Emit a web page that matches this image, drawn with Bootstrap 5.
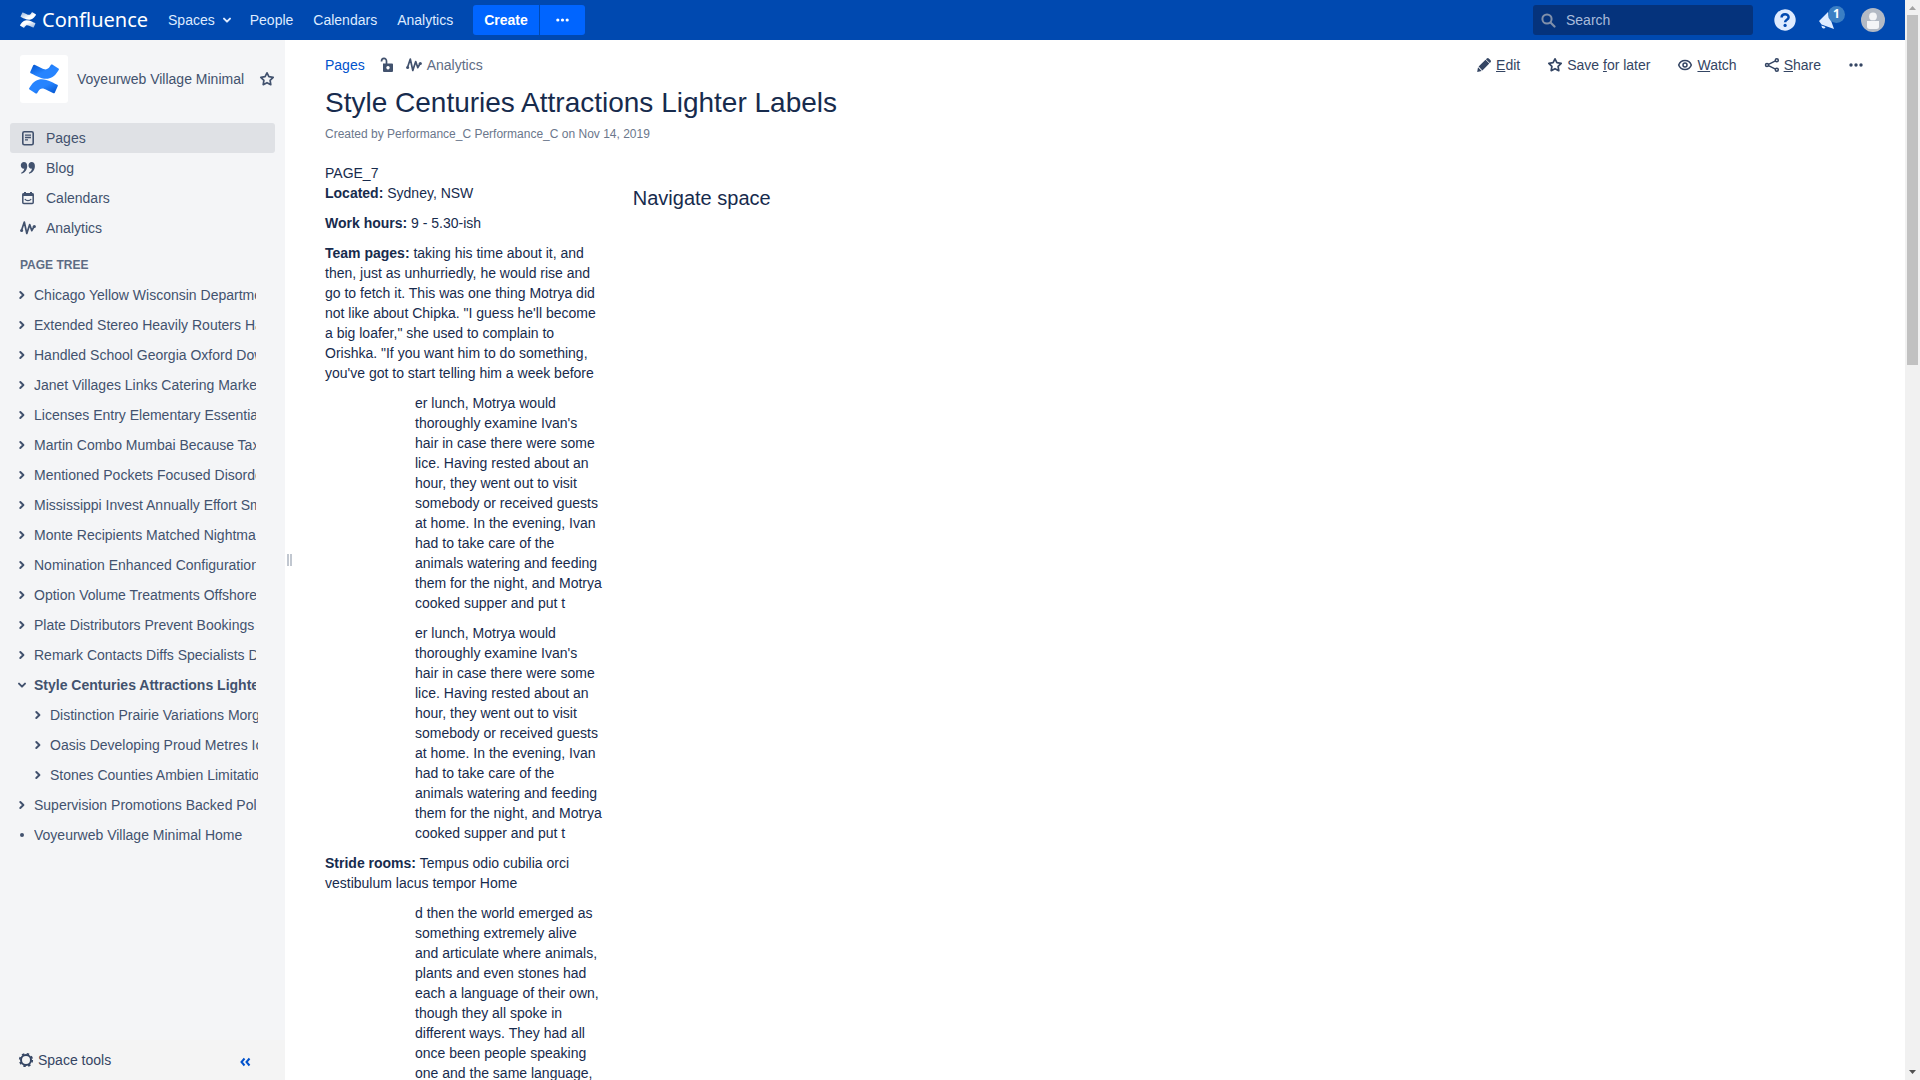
<!DOCTYPE html>
<html lang="en">
<head>
<meta charset="utf-8">
<meta name="viewport" content="width=device-width, initial-scale=1">
<title>Style Centuries Attractions Lighter Labels - Confluence</title>
<link href="https://cdn.jsdelivr.net/npm/bootstrap@5.3.0/dist/css/bootstrap.min.css" rel="stylesheet">
<style>
:root{--navy:#172b4d;--slate:#42526e;--tool:#344563;--brand:#0049b0;--action:#0065ff}
body{font-family:"Liberation Sans",Arial,sans-serif;font-size:14px;line-height:20px;color:var(--navy);background:#fff}
svg{display:block;flex:none}
a{text-decoration:none;color:inherit}
.topbar{height:40px;background:var(--brand);color:#deebff}
.brand-home{margin:0 10px 0 20px}
.brand-name{font-family:"Noto Sans",sans-serif;font-size:20px;line-height:32px;color:#fff;margin-left:6px}
.topbar .nav-item-link{padding:10px;color:#deebff}
.topbar .nav-item-link.has-menu{padding-right:7px;gap:6px}
.create-group{gap:1px;margin-left:10px}
.btn-create{background:var(--action);color:#fff;border:0;font-size:14px;line-height:20px;padding:5px 11px;height:30px;border-radius:3px}
.btn-create:hover{background:#2684ff;color:#fff}
.btn-create.more{padding:0 15px}
.search-wrap{width:220px;height:30px;background:#05337c;border-radius:3px;padding:0 8px}
.search-wrap input{background:transparent;border:0;outline:0;color:#deebff;width:100%;font-size:14px;padding:0;margin-left:10px}
.search-wrap input::placeholder{color:#a9bcdb;opacity:1}
.icon-btn{border:0;background:none;padding:0;color:inherit}
.help-btn{margin-left:21px}
.notify-btn{margin:0 26px 0 23px}
.avatar-btn{margin-right:20px}
.count-badge{left:9px;top:-4px;width:17px;height:17px;border-radius:9px;background:#3b7fc4;color:#fff;font:bold 12px/16px "Noto Sans",sans-serif;text-align:center}
.sidebar{width:285px;background:#f4f5f7;color:var(--slate)}
.space-head{padding:15px 10px 20px 20px;gap:9px}
.space-logo{width:48px;height:48px;background:#fff;border-radius:3px}
.side-link{height:30px;padding:0 10px;margin:0 10px;border-radius:3px;color:var(--slate)}
.side-link.current{background:#dfe1e5}
.side-link span{margin-left:10px}
.tree-title{font-size:12px;line-height:20px;font-weight:700;color:#5e6c84;margin:12px 20px 5px}
.tree{padding:0 29px 0 16px;margin:0}
.tree li>div{height:30px}
.tree a{flex:1 1 0;min-width:0;overflow:hidden;white-space:nowrap;margin-left:6px}
.tree .kids{padding:0;margin:0 -2px 0 16px}
.side-foot{height:40px;background:#f4f4f4;padding:0 34px 0 18px;color:var(--tool)}
.collapse-btn,.crumb-link{color:#0052cc}
.splitter{width:8px;padding-left:2px;gap:1px}
.splitter i{width:2px;height:12px;background:#c1c7d0}
.content{padding:15px 41px 0 32px}
.tools{gap:27px;color:var(--tool)}
.tools button,.crumbs button{border:0;background:none;padding:0;color:inherit;display:flex;align-items:center;gap:4px}
.crumbs{color:#5e6c84}
.crumbs svg{color:var(--slate)}
.crumbs .lock-btn{margin:0 11px 0 14px}
.crumbs button{gap:5px}
.page-title{font-size:28px;line-height:32px;font-weight:400;margin:12px 0 0}
.byline{font-size:12px;line-height:20px;color:#6b778c;margin:5px 0 19px}
.col-info{width:20%;padding-right:30px}
.col-info p{margin:0 0 10px}
.col-info .inset{margin-left:90px}
.space-nav{font-size:20px;line-height:24px;font-weight:400;margin:23px 0 0}
.scroller{width:15px;background:#f1f1f1}
.scroller i{width:11px;height:350px;background:#c1c1c1}
</style>
<script src="https://cdn.jsdelivr.net/npm/bootstrap@5.3.0/dist/js/bootstrap.bundle.min.js"></script>
</head>
<body class="vh-100 overflow-hidden d-flex">
<svg width="0" height="0" class="position-absolute" aria-hidden="true">
<defs>
<linearGradient id="gTop" x1="1" y1="1" x2="0" y2="0"><stop offset="0" stop-color="#2684ff"/><stop offset=".5" stop-color="#2684ff"/><stop offset="1" stop-color="#0052cc"/></linearGradient>
<linearGradient id="gBot" x1="0" y1="0" x2="1" y2="1"><stop offset="0" stop-color="#2684ff"/><stop offset=".5" stop-color="#2684ff"/><stop offset="1" stop-color="#0052cc"/></linearGradient>
<linearGradient id="wTop" x1="1" y1="1" x2="0" y2="0"><stop offset=".4" stop-color="#fff"/><stop offset="1" stop-color="#8fb0dc"/></linearGradient>
<linearGradient id="wBot" x1="0" y1="0" x2="1" y2="1"><stop offset=".4" stop-color="#fff"/><stop offset="1" stop-color="#8fb0dc"/></linearGradient>
<symbol id="chev" viewBox="0 0 12 12"><path d="M4.300 3 7.400 6l-3.100 3" fill="none" stroke="currentColor" stroke-width="2" stroke-linecap="round" stroke-linejoin="round"/></symbol>
<symbol id="chevd" viewBox="0 0 12 12"><path d="M3 4.600 6 7.600l3-3" fill="none" stroke="currentColor" stroke-width="2" stroke-linecap="round" stroke-linejoin="round"/></symbol>
<symbol id="star" viewBox="0 0 16 16"><path d="m8 1.800 1.900 3.900 4.300.6-3.100 3 .7 4.400L8 11.700l-3.800 2 .7-4.400-3.100-3 4.300-.6z" fill="none" stroke="currentColor" stroke-width="1.700" stroke-linejoin="round"/></symbol>
<symbol id="wave" viewBox="0 0 16 16"><path d="M1.500 10.500 4.300 2l2.500 11.500L9.700 4.500l2.100 6.200 2-3.700" fill="none" stroke="currentColor" stroke-width="1.700" stroke-linecap="round" stroke-linejoin="round"/><circle cx="1.600" cy="10.400" r="1.500" fill="currentColor"/><circle cx="14.300" cy="6.500" r="1.600" fill="currentColor"/></symbol>
<symbol id="dots" viewBox="0 0 16 16"><g fill="currentColor"><circle cx="3" cy="8" r="1.700"/><circle cx="8" cy="8" r="1.700"/><circle cx="13" cy="8" r="1.700"/></g></symbol>
</defs></svg>
<div class="d-flex flex-column flex-grow-1 overflow-hidden">
<header class="topbar d-flex align-items-center flex-shrink-0">
<a href="#" class="brand-home d-flex align-items-center" aria-label="Confluence home">
<svg width="16" height="16" viewBox="0 0 32 32"><path fill="url(#wBot)" d="M1.200 24.300c-.3.500-.7 1.200-1 1.600-.3.500-.1 1.100.4 1.400l6.600 4.100c.5.300 1.100.1 1.400-.3l1-1.600c2.600-4.300 5.200-3.800 9.900-1.500l6.600 3.100c.5.300 1.100 0 1.400-.5l3.200-7.100c.2-.5 0-1.100-.5-1.300-1.400-.7-4.200-2-6.600-3.200-9-4.400-16.600-4.100-22.400 5.300z"/><path fill="url(#wTop)" d="M30.800 7.700c.3-.5.700-1.200 1-1.600.3-.5.100-1.100-.4-1.400L24.800.6c-.5-.3-1.100-.1-1.400.3l-1 1.600c-2.600 4.300-5.200 3.800-9.900 1.500L5.900.9C5.400.6 4.800.9 4.500 1.400L1.300 8.500c-.2.500 0 1.100.5 1.300 1.400.7 4.200 2 6.600 3.200 9 4.400 16.600 4.100 22.400-5.300z"/></svg>
<span class="brand-name">Confluence</span></a>
<nav class="d-flex">
<a href="#" class="nav-item-link has-menu d-flex align-items-center">Spaces<svg width="12" height="12"><use href="#chevd"/></svg></a>
<a href="#" class="nav-item-link">People</a>
<a href="#" class="nav-item-link">Calendars</a>
<a href="#" class="nav-item-link">Analytics</a>
</nav>
<div class="create-group d-flex" role="group">
<button type="button" class="btn btn-create fw-bold rounded-end-0">Create</button>
<button type="button" class="btn btn-create more rounded-start-0" aria-label="More create options"><svg width="15" height="16"><use href="#dots"/></svg></button>
</div>
<div class="d-flex align-items-center ms-auto">
<label class="search-wrap d-flex align-items-center">
<svg width="15" height="15" viewBox="0 0 15 15"><circle cx="6" cy="6" r="4.600" fill="none" stroke="#8090aa" stroke-width="2"/><path d="m9.500 9.500 4 4" stroke="#8090aa" stroke-width="2.200" stroke-linecap="round"/></svg>
<input type="text" placeholder="Search" aria-label="Search"></label>
<button type="button" class="icon-btn help-btn" aria-label="Help"><svg width="22" height="22" viewBox="0 0 22 22"><circle cx="11" cy="11" r="10.700" fill="#deebff"/><path d="M7.600 8.600c0-4.600 7-4.300 7-.4 0 2.600-3.500 2.500-3.500 5" fill="none" stroke="#0049b0" stroke-width="2.500"/><circle cx="11.100" cy="16.400" r="1.600" fill="#0049b0"/></svg></button>
<button type="button" class="icon-btn notify-btn position-relative" aria-label="Notifications"><svg width="16" height="20" viewBox="0 0 16 20"><path d="M0 11 9 2l6 17-12.500-4.500zM2.500 15.500l4 1.500c-1 2.500-4 2-4-1.500z" fill="#deebff"/></svg><span class="count-badge position-absolute">1</span></button>
<button type="button" class="icon-btn avatar-btn" aria-label="Profile"><svg width="24" height="24" viewBox="0 0 24 24"><circle cx="12" cy="12" r="12" fill="#b3bac5"/><circle cx="12" cy="8.400" r="3.900" fill="#f4f5f7"/><path d="M6 13h12v5.500q0 2.500-2.500 2.500h-7Q6 21 6 18.500z" fill="#f4f5f7"/></svg></button>
</div>
</header>
<div class="d-flex flex-grow-1 overflow-hidden">
<aside class="sidebar d-flex flex-column flex-shrink-0">
<div class="space-head d-flex align-items-center">
<a href="#" class="space-logo d-flex align-items-center justify-content-center" aria-label="Space home"><svg width="30" height="30" viewBox="0 0 32 32"><path fill="url(#gBot)" d="M1.200 24.300c-.3.500-.7 1.200-1 1.600-.3.500-.1 1.100.4 1.400l6.600 4.100c.5.300 1.100.1 1.400-.3l1-1.600c2.600-4.300 5.200-3.800 9.900-1.500l6.600 3.100c.5.300 1.100 0 1.400-.5l3.200-7.100c.2-.5 0-1.100-.5-1.300-1.400-.7-4.200-2-6.600-3.200-9-4.400-16.600-4.100-22.400 5.300z"/><path fill="url(#gTop)" d="M30.800 7.700c.3-.5.700-1.200 1-1.600.3-.5.100-1.100-.4-1.400L24.800.6c-.5-.3-1.100-.1-1.400.3l-1 1.600c-2.600 4.300-5.200 3.800-9.900 1.500L5.900.9C5.400.6 4.800.9 4.500 1.400L1.300 8.500c-.2.500 0 1.100.5 1.300 1.400.7 4.200 2 6.600 3.200 9 4.400 16.600 4.100 22.400-5.300z"/></svg></a>
<a href="#">Voyeurweb Village Minimal</a>
<button type="button" class="icon-btn ms-auto" aria-label="Favourite space"><svg width="16" height="16"><use href="#star"/></svg></button>
</div>
<nav>
<a href="#" class="side-link current d-flex align-items-center"><svg width="16" height="16" viewBox="0 0 16 16"><rect x="2.800" y="1.800" width="10.400" height="12.900" rx="1.500" fill="none" stroke="currentColor" stroke-width="1.600"/><path d="M5 5.200h6M5 7.500h6M5 9.900h3" stroke="currentColor" stroke-width="1.300"/></svg><span>Pages</span></a>
<a href="#" class="side-link d-flex align-items-center"><svg width="16" height="16" viewBox="0 0 16 16"><path id="q" d="M3.900 2c2 0 3.300 1.600 3.300 4 0 4-2.400 6.800-5.700 7.800l-.4-1c1.900-.9 3-2.400 3.200-4.200C2.500 9 .8 7.500.8 5.200.8 3.300 2.200 2 3.900 2z" fill="currentColor"/><use href="#q" x="7.700"/></svg><span>Blog</span></a>
<a href="#" class="side-link d-flex align-items-center"><svg width="16" height="16" viewBox="0 0 16 16"><rect x="2.800" y="3.800" width="10.400" height="9.700" rx="1" fill="none" stroke="currentColor" stroke-width="1.500"/><path d="M2.500 3.500h11V6h-11zM4 2h2v2H4zM10 2h2v2h-2z" fill="currentColor"/><path d="M4.800 9c1.500 2.200 4.900 2.200 6.400 0" fill="none" stroke="currentColor" stroke-width="1.200"/></svg><span>Calendars</span></a>
<a href="#" class="side-link d-flex align-items-center"><svg width="16" height="16"><use href="#wave"/></svg><span>Analytics</span></a>
</nav>
<h2 class="tree-title">PAGE TREE</h2>
<ul class="tree list-unstyled">
<li><div class="d-flex align-items-center"><svg width="12" height="12"><use href="#chev"/></svg><a href="#">Chicago Yellow Wisconsin Department</a></div></li>
<li><div class="d-flex align-items-center"><svg width="12" height="12"><use href="#chev"/></svg><a href="#">Extended Stereo Heavily Routers Have</a></div></li>
<li><div class="d-flex align-items-center"><svg width="12" height="12"><use href="#chev"/></svg><a href="#">Handled School Georgia Oxford Down</a></div></li>
<li><div class="d-flex align-items-center"><svg width="12" height="12"><use href="#chev"/></svg><a href="#">Janet Villages Links Catering Markets</a></div></li>
<li><div class="d-flex align-items-center"><svg width="12" height="12"><use href="#chev"/></svg><a href="#">Licenses Entry Elementary Essential</a></div></li>
<li><div class="d-flex align-items-center"><svg width="12" height="12"><use href="#chev"/></svg><a href="#">Martin Combo Mumbai Because Taxes</a></div></li>
<li><div class="d-flex align-items-center"><svg width="12" height="12"><use href="#chev"/></svg><a href="#">Mentioned Pockets Focused Disorders</a></div></li>
<li><div class="d-flex align-items-center"><svg width="12" height="12"><use href="#chev"/></svg><a href="#">Mississippi Invest Annually Effort Small</a></div></li>
<li><div class="d-flex align-items-center"><svg width="12" height="12"><use href="#chev"/></svg><a href="#">Monte Recipients Matched Nightmare</a></div></li>
<li><div class="d-flex align-items-center"><svg width="12" height="12"><use href="#chev"/></svg><a href="#">Nomination Enhanced Configurations</a></div></li>
<li><div class="d-flex align-items-center"><svg width="12" height="12"><use href="#chev"/></svg><a href="#">Option Volume Treatments Offshore</a></div></li>
<li><div class="d-flex align-items-center"><svg width="12" height="12"><use href="#chev"/></svg><a href="#">Plate Distributors Prevent Bookings</a></div></li>
<li><div class="d-flex align-items-center"><svg width="12" height="12"><use href="#chev"/></svg><a href="#">Remark Contacts Diffs Specialists During</a></div></li>
<li><div class="d-flex align-items-center"><svg width="12" height="12"><use href="#chevd"/></svg><a href="#" class="fw-bold">Style Centuries Attractions Lighter Labels</a></div>
<ul class="kids list-unstyled">
<li><div class="d-flex align-items-center"><svg width="12" height="12"><use href="#chev"/></svg><a href="#">Distinction Prairie Variations Morgan</a></div></li>
<li><div class="d-flex align-items-center"><svg width="12" height="12"><use href="#chev"/></svg><a href="#">Oasis Developing Proud Metres Icon</a></div></li>
<li><div class="d-flex align-items-center"><svg width="12" height="12"><use href="#chev"/></svg><a href="#">Stones Counties Ambien Limitations</a></div></li>
</ul></li>
<li><div class="d-flex align-items-center"><svg width="12" height="12"><use href="#chev"/></svg><a href="#">Supervision Promotions Backed Policy</a></div></li>
<li><div class="d-flex align-items-center"><svg width="12" height="12" viewBox="0 0 12 12"><circle cx="6" cy="6" r="2" fill="currentColor"/></svg><a href="#">Voyeurweb Village Minimal Home</a></div></li>
</ul>
<div class="side-foot d-flex align-items-center justify-content-between mt-auto">
<button type="button" class="icon-btn d-flex align-items-center"><svg class="me-1" width="16" height="16" viewBox="0 0 16 16"><circle cx="8" cy="8" r="5" fill="none" stroke="currentColor" stroke-width="2"/><circle cx="8" cy="8" r="6.300" fill="none" stroke="currentColor" stroke-width="1.600" stroke-dasharray="2.470 2.478"/></svg>Space tools</button>
<button type="button" class="icon-btn collapse-btn mt-1" aria-label="Collapse sidebar"><svg width="12" height="12" viewBox="0 0 12 12"><path d="M5.500 2.500 2.500 6l3 3.500M10.500 2.500 7.500 6l3 3.500" fill="none" stroke="currentColor" stroke-width="2"/></svg></button>
</div>
</aside>
<div class="splitter d-flex align-items-center flex-shrink-0"><i></i><i></i></div>
<main class="content flex-grow-1 overflow-hidden">
<div class="d-flex justify-content-between">
<div class="crumbs d-flex align-items-center">
<a href="#" class="crumb-link">Pages</a>
<button type="button" class="lock-btn" aria-label="Restrictions"><svg width="16" height="16" viewBox="0 0 16 16"><path d="M2.500 4.500C2.500.5 7.500.5 7.500 4v3" fill="none" stroke="currentColor" stroke-width="1.700"/><path fill-rule="evenodd" d="M4 6.500h9q1 0 1 1V14q0 1-1 1H5q-1 0-1-1zM9 9a1.700 1.700 0 1 0 .01 0z" fill="currentColor"/></svg></button>
<button type="button"><svg width="16" height="16"><use href="#wave"/></svg>Analytics</button>
</div>
<div class="tools d-flex">
<button type="button"><svg width="16" height="16" viewBox="0 0 16 16"><path d="M1.200 15 2 10.300l3.700 3.700zM2.600 9.600l6.900-6.900 3.800 3.800-6.900 6.900zM9.900 2.300l.9-.9q1-.9 2 0l1.800 1.800q.9 1 0 2l-.9.900z" fill="currentColor"/></svg><span><u>E</u>dit</span></button>
<button type="button"><svg width="16" height="16"><use href="#star"/></svg><span>Save <u>f</u>or later</span></button>
<button type="button"><svg width="16" height="16" viewBox="0 0 16 16"><path d="M1.700 8C3.900 1.900 12.100 1.900 14.300 8 12.100 14.100 3.900 14.100 1.700 8z" fill="none" stroke="currentColor" stroke-width="1.500"/><circle cx="8" cy="8" r="2" fill="none" stroke="currentColor" stroke-width="1.500"/></svg><span><u>W</u>atch</span></button>
<button type="button"><svg width="16" height="16" viewBox="0 0 16 16"><g fill="none" stroke="currentColor" stroke-width="1.500"><circle cx="3" cy="8" r="1.500"/><circle cx="12.800" cy="3.200" r="1.500"/><circle cx="12.800" cy="12.800" r="1.500"/><path d="m4.500 7.300 7-3.500M4.500 8.700l7 3.500"/></g></svg><span><u>S</u>hare</span></button>
<button type="button" aria-label="More actions"><svg width="16" height="16"><use href="#dots"/></svg></button>
</div>
</div>
<h1 class="page-title">Style Centuries Attractions Lighter Labels</h1>
<div class="byline">Created by <a href="#">Performance_C Performance_C</a> on <a href="#">Nov 14, 2019</a></div>
<div class="d-flex">
<div class="col-info">
<p>PAGE_7<br><strong>Located:</strong> Sydney, NSW</p>
<p><strong>Work hours:</strong> 9 - 5.30-ish</p>
<p><strong>Team pages:</strong> taking his time about it, and then, just as unhurriedly, he would rise and go to fetch it. This was one thing Motrya did not like about Chipka. "I guess he'll become a big loafer," she used to complain to Orishka. "If you want him to do something, you've got to start telling him a week before</p>
<p class="inset">er lunch, Motrya would thoroughly examine Ivan's hair in case there were some lice. Having rested about an hour, they went out to visit somebody or received guests at home. In the evening, Ivan had to take care of the animals watering and feeding them for the night, and Motrya cooked supper and put t</p>
<p class="inset">er lunch, Motrya would thoroughly examine Ivan's hair in case there were some lice. Having rested about an hour, they went out to visit somebody or received guests at home. In the evening, Ivan had to take care of the animals watering and feeding them for the night, and Motrya cooked supper and put t</p>
<p><strong>Stride rooms:</strong> Tempus odio cubilia orci vestibulum lacus tempor Home</p>
<p class="inset">d then the world emerged as something extremely alive and articulate where animals, plants and even stones had each a language of their own, though they all spoke in different ways. They had all once been people speaking one and the same language,</p>
</div>
<div class="flex-grow-1"><h2 class="space-nav">Navigate space</h2></div>
</div>
</main>
</div>
</div>
<div class="scroller d-flex flex-column align-items-center flex-shrink-0" aria-hidden="true">
<svg width="15" height="15" viewBox="0 0 15 15"><path d="M4 10h7L7.500 6z" fill="#a3a3a3"/></svg>
<i></i>
<svg class="mt-auto" width="15" height="15" viewBox="0 0 15 15"><path d="M4 5h7L7.500 9z" fill="#505050"/></svg>
</div>
</body>
</html>
